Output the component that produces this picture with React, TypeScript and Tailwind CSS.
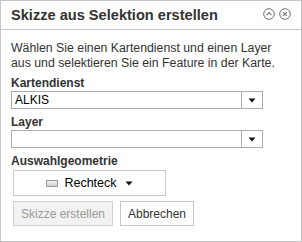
import React from "react";

function Chevron() {
  return (
    <svg width="12" height="12" viewBox="0 0 12 12" fill="none">
      <circle cx="6" cy="6" r="5.3" stroke="#707070" strokeWidth="1" />
      <path d="M3.6 7.1 L6 4.7 L8.4 7.1" stroke="#707070" strokeWidth="1.2" />
    </svg>
  );
}

function Close() {
  return (
    <svg width="12" height="12" viewBox="0 0 12 12" fill="none">
      <circle cx="6" cy="6" r="5.3" stroke="#707070" strokeWidth="1" />
      <path d="M4.2 4.2 L7.8 7.8 M7.8 4.2 L4.2 7.8" stroke="#707070" strokeWidth="1.1" />
    </svg>
  );
}

function Arrow() {
  return (
    <svg width="8" height="5" viewBox="0 0 8 5">
      <path d="M0.5 0.5 H7.5 L4 4.5 Z" fill="#111" />
    </svg>
  );
}

function Select({ value }: { value: string }) {
  return (
    <div className="flex h-[18px] w-[252px] border border-[#acacac] bg-white">
      <div className="flex-1 pl-[3px] text-[12px] leading-[16px] text-black">{value}</div>
      <div className="flex w-[21px] items-center justify-center border-l border-[#acacac]">
        <Arrow />
      </div>
    </div>
  );
}

export default function App() {
  return (
    <div className="h-[242px] w-[302px] border border-[#c6c6c6] bg-white font-['Liberation_Sans',Arial,sans-serif] text-[#333]">
      <div className="flex h-[29px] items-center justify-between border-b border-[#c6c6c6] pl-[10px] pr-[10px]">
        <div className="text-[14.6px] font-bold leading-[17px] text-[#333]">Skizze aus Selektion erstellen</div>
        <div className="flex gap-[4px] pb-[2px]">
          <Chevron />
          <Close />
        </div>
      </div>
      <div className="px-[10px] pt-[11px]">
        <p className="text-[12.3px] leading-[15px]">
          Wählen Sie einen Kartendienst und einen Layer aus und selektieren Sie ein Feature in der Karte.
        </p>
        <div className="mt-[5px] text-[12px] font-bold leading-[15px]">Kartendienst</div>
        <Select value="ALKIS" />
        <div className="mt-[6px] text-[12px] font-bold leading-[15px]">Layer</div>
        <Select value="" />
        <div className="mt-[6px] text-[12px] font-bold leading-[15px]">Auswahlgeometrie</div>
        <div className="ml-[2px] mt-[1px] flex h-[26px] w-[153px] items-center justify-center border border-[#c8c8c8] bg-white">
          <div className="mr-[6px] h-[7px] w-[12px] border border-[#9a9a9a] bg-gradient-to-b from-[#f4f4f4] to-[#cfcfcf]" />
          <span className="text-[12.5px] leading-[16px] text-black">Rechteck</span>
          <span className="ml-[8px] flex items-center">
            <Arrow />
          </span>
        </div>
        <div className="ml-[2px] mt-[5px] flex gap-[7px]">
          <div className="flex h-[25px] w-[100px] items-center justify-center border border-[#d2d2d2] bg-[#f2f2f2] text-[12px] text-[#9a9a9a]">
            Skizze erstellen
          </div>
          <div className="flex h-[25px] w-[74px] items-center justify-center border border-[#c6c6c6] bg-white text-[12px] text-[#333]">
            Abbrechen
          </div>
        </div>
      </div>
    </div>
  );
}
